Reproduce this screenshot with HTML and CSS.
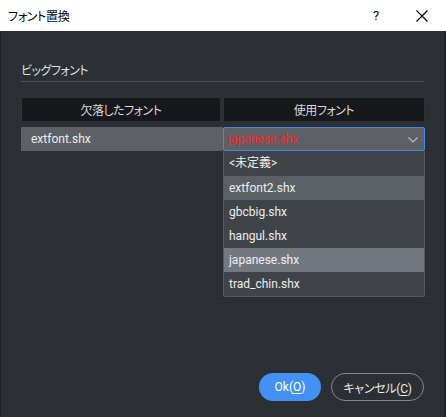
FILE: index.html
```html
<!DOCTYPE html>
<html lang="ja">
<head>
<meta charset="utf-8">
<link rel="stylesheet" href="styles.css">
</head>
<body>
<div class="window">
  <div class="titlebar">
    <span class="title">フォント置換</span>
    <span class="tb-help">?</span>
    <span class="tb-close">
      <svg width="12" height="12" viewBox="0 0 12 12"><path d="M0.5 0.5 L11.5 11.5 M11.5 0.5 L0.5 11.5" stroke="#000" stroke-width="1.1" fill="none"/></svg>
    </span>
  </div>
  <div class="body">
    <div class="content">
      <div class="section">ビッグフォント</div>
      <div class="table">
        <div class="th">欠落したフォント</div>
        <div class="th">使用フォント</div>
        <div class="td">extfont.shx</div>
        <div class="combo-wrap">
          <div class="combo">
            <span class="combo-text">japanese.shx</span>
            <svg class="chev" width="10" height="6" viewBox="0 0 10 6"><path d="M0.5 0.5 L5 5 L9.5 0.5" stroke="#b8bbbf" stroke-width="1.2" fill="none"/></svg>
          </div>
          <ul class="dropdown">
            <li>&lt;未定義&gt;</li>
            <li class="hover">extfont2.shx</li>
            <li>gbcbig.shx</li>
            <li>hangul.shx</li>
            <li class="selected">japanese.shx</li>
            <li>trad_chin.shx</li>
          </ul>
        </div>
      </div>
    </div>
    <div class="footer">
      <button class="btn btn-ok">Ok(<u>O</u>)</button>
      <button class="btn btn-cancel">キャンセル(<u>C</u>)</button>
    </div>
  </div>
</div>
</body>
</html>
```

FILE: styles.css
```css
html, body {
  margin: 0;
  padding: 0;
}
body {
  width: 446px;
  height: 417px;
  overflow: hidden;
  font-family: Roboto, "Noto Sans CJK JP", sans-serif;
  font-size: 12px;
  font-feature-settings: "palt";
}
.window {
  display: flex;
  flex-direction: column;
  height: 417px;
}
.titlebar {
  height: 31px;
  background: #ffffff;
  display: flex;
  align-items: center;
  padding-left: 8px;
  color: #000;
  flex: none;
}
.title {
  flex: 1;
  font-size: 12px;
  font-family: "Noto Sans CJK JP", sans-serif;
  letter-spacing: -0.3px;
}
.tb-help {
  width: 24px;
  text-align: center;
  font-size: 13px;
  margin-right: 22px;
}
.tb-close {
  width: 24px;
  margin-right: 12px;
  display: flex;
  justify-content: center;
}
.body {
  flex: 1;
  display: flex;
  flex-direction: column;
  background-color: #2b2e33;
  background-image: radial-gradient(circle, #31353a 0.6px, transparent 0.8px);
  background-size: 4px 4px;
  border-left: 1px solid #1f2125;
  border-right: 2px solid #1f2125;
}
.content {
  flex: 1;
  padding: 31px 20px 0 20px;
}
.section {
  color: #dfe1e4;
  font-family: "Noto Sans CJK JP", sans-serif;
  letter-spacing: -0.5px;
  line-height: 16px;
  padding-bottom: 3px;
  border-bottom: 1px solid #4a4e54;
}
.table {
  margin-top: 15px;
  display: grid;
  grid-template-columns: 200px 202px;
  column-gap: 2px;
  row-gap: 5px;
}
.th {
  height: 25px;
  box-sizing: border-box;
  background: #17181c;
  border: 1px solid #2e3136;
  color: #d8d9db;
  text-align: center;
  line-height: 23px;
  font-family: "Noto Sans CJK JP", sans-serif;
  letter-spacing: -0.5px;
}
.td {
  height: 24px;
  background: #5d6167;
  color: #eceef0;
  line-height: 24px;
  padding-left: 10px;
  margin-right: -2px;
}
.combo-wrap {
  position: relative;
}
.combo {
  height: 24px;
  box-sizing: border-box;
  border: 1px solid #3d8ce6;
  border-radius: 2px;
  background: #5d6167;
  display: flex;
  align-items: center;
  padding: 0 6px 0 4px;
}
.combo-text {
  flex: 1;
  color: #ff2121;
}
.chev {
  margin-top: 1px;
}
.dropdown {
  position: absolute;
  top: 24px;
  left: 0;
  width: 202px;
  box-sizing: border-box;
  margin: 0;
  padding: 0;
  list-style: none;
  background: #404348;
  border: 1px solid #56595e;
  border-top: none;
  border-radius: 0 0 2px 2px;
  z-index: 2;
}
.dropdown li {
  height: 24px;
  line-height: 24px;
  padding-left: 5px;
  color: #eceef0;
}
.dropdown li:first-child {
  height: 25px;
  line-height: 25px;
}
.dropdown li.hover {
  background: #5b5f66;
}
.dropdown li.selected {
  background: #737880;
}
.footer {
  display: flex;
  justify-content: flex-end;
  gap: 10px;
  padding: 0 20px 16px 0;
}
.btn {
  height: 28px;
  border-radius: 14px;
  font-family: Roboto, "Noto Sans CJK JP", sans-serif;
  font-size: 12px;
  font-feature-settings: "palt";
  padding: 0;
  cursor: pointer;
}
.btn u {
  text-underline-offset: 2px;
}
.btn-ok {
  width: 62px;
  background: #4391f4;
  border: none;
  color: #ffffff;
}
.btn-cancel {
  width: 93px;
  background: transparent;
  border: 1px solid #83868b;
  color: #e8e9eb;
  letter-spacing: -0.3px;
}
```
